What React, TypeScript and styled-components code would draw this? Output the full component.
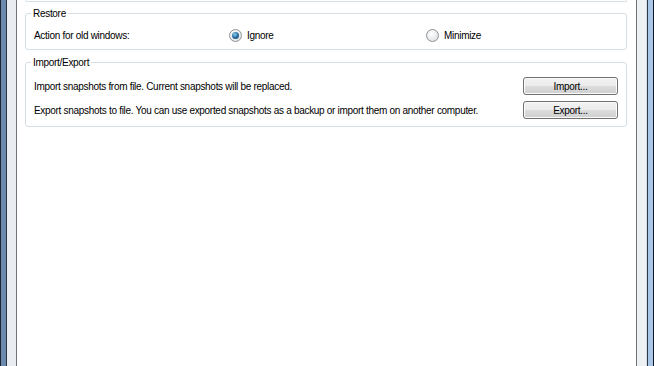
import React from "react"
import styled, { createGlobalStyle } from "styled-components"

const GlobalStyle = createGlobalStyle`
  html, body {
    margin: 0;
    padding: 0;
    background: #ffffff;
  }
  body {
    font-family: "Liberation Sans", Arial, sans-serif;
    font-size: 10px;
    letter-spacing: -0.3px;
    color: #000;
  }
`

const Window = styled.div`
  display: flex;
  width: 654px;
  height: 366px;
  overflow: hidden;
`

const FrameLeft = styled.div`
  width: 17px;
  flex: none;
  background: linear-gradient(
    to right,
    #1b2736 0 1px,
    #6b88ad 1px 6px,
    #263343 6px 7px,
    #e9edf1 7px 16px,
    #6d7278 16px 17px
  );
`

const FrameRight = styled.div`
  width: 18px;
  flex: none;
  background: linear-gradient(
    to right,
    #6d7278 0 1px,
    #eef1f4 1px 10px,
    #d6dde4 10px 11px,
    #2c3846 11px 12px,
    #a9c6e6 12px 17px,
    #0e1722 17px 18px
  );
`

const Client = styled.div`
  flex: 1;
  background: #ffffff;
  padding: 0 9px 0 8px;
`

const PrevGroupTail = styled.div`
  height: 1px;
  border: 1px solid #d5dfe5;
  border-top: none;
  border-radius: 0 0 3px 3px;
`

const Group = styled.fieldset<{ $gap: number; $top: number; $bottom: number }>`
  margin: ${p => p.$gap}px 0 0 0;
  padding: ${p => p.$top}px 0 ${p => p.$bottom}px 5px;
  border: 1px solid #d5dfe5;
  border-radius: 3px;
  min-width: 0;
`

const Legend = styled.legend`
  padding: 0 2px;
  line-height: 13px;
`

const OptionRow = styled.div`
  display: grid;
  grid-template-columns: 195px 197px 1fr;
  align-items: center;
  height: 22px;
  padding-left: 3px;
`

const Radio = styled.label`
  display: flex;
  align-items: center;
  gap: 5px;
`

const RadioDot = styled.span<{ $checked?: boolean }>`
  position: relative;
  width: 11px;
  height: 11px;
  border-radius: 50%;
  border: 1px solid #8e9196;
  background: radial-gradient(circle at 40% 35%, #ffffff 0%, #e4e6e8 70%, #cfd2d5 100%);
  &::after {
    content: "";
    display: ${p => (p.$checked ? "block" : "none")};
    position: absolute;
    left: 2px;
    top: 2px;
    width: 7px;
    height: 7px;
    border-radius: 50%;
    background: radial-gradient(circle at 40% 35%, #8fd0f2 0%, #2a6fa0 50%, #143f5e 100%);
  }
`

const ActionRow = styled.div`
  display: flex;
  align-items: center;
  justify-content: space-between;
  height: 24px;
  padding: 0 8px 0 3px;
`

const Button = styled.button`
  flex: none;
  width: 95px;
  height: 18px;
  padding: 0;
  font-family: "Liberation Sans", Arial, sans-serif;
  font-size: 10px;
  letter-spacing: -0.3px;
  color: #000;
  border: 1px solid #707070;
  border-radius: 3px;
  background: linear-gradient(
    to bottom,
    #f2f2f2 0%,
    #ebebeb 50%,
    #dddddd 50%,
    #cfcfcf 100%
  );
  box-shadow: inset 0 0 0 1px #fcfcfc;
`

export default function App() {
  return (
    <>
      <GlobalStyle />
      <Window>
        <FrameLeft />
        <Client>
          <PrevGroupTail />
          <Group $gap={5} $top={4} $bottom={3}>
            <Legend>Restore</Legend>
            <OptionRow>
              <span>Action for old windows:</span>
              <Radio>
                <RadioDot $checked />
                Ignore
              </Radio>
              <Radio>
                <RadioDot />
                Minimize
              </Radio>
            </OptionRow>
          </Group>
          <Group $gap={6} $top={5} $bottom={4}>
            <Legend>Import/Export</Legend>
            <ActionRow>
              <span>Import snapshots from file. Current snapshots will be replaced.</span>
              <Button>Import...</Button>
            </ActionRow>
            <ActionRow>
              <span>
                Export snapshots to file. You can use exported snapshots as a backup or import
                them on another computer.
              </span>
              <Button>Export...</Button>
            </ActionRow>
          </Group>
        </Client>
        <FrameRight />
      </Window>
    </>
  )
}
